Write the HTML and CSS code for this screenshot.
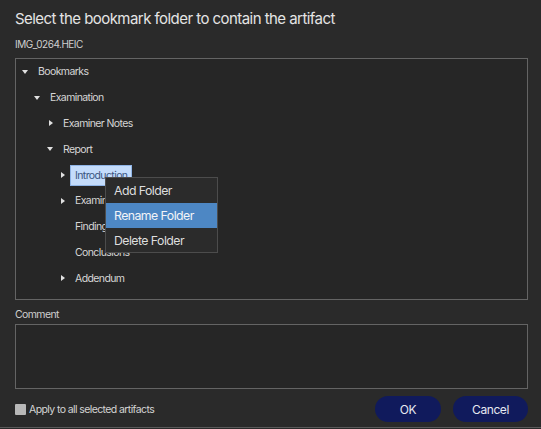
FILE: index.html
```html
<!DOCTYPE html>
<html>
<head>
	<meta charset="utf-8">
	<title>Select bookmark folder</title>
	<link rel="stylesheet" href="styles.css">
</head>
<body>
<div class="dlg">
	<div class="title">Select the bookmark folder to contain the artifact</div>
	<div class="file">IMG_0264.HEIC</div>

	<div class="tree">
		<div class="row l0"><span class="caret down"></span><span class="lbl">Bookmarks</span></div>
		<div class="row l1"><span class="caret down"></span><span class="lbl">Examination</span></div>
		<div class="row l2"><span class="caret right"></span><span class="lbl">Examiner Notes</span></div>
		<div class="row l2"><span class="caret down"></span><span class="lbl">Report</span></div>
		<div class="row l3"><span class="caret right"></span><span class="lbl sel">Introduction</span></div>
		<div class="row l3"><span class="caret right"></span><span class="lbl">Examiner Findings</span></div>
		<div class="row l3"><span class="caret"></span><span class="lbl">Findings</span></div>
		<div class="row l3"><span class="caret"></span><span class="lbl">Conclusions</span></div>
		<div class="row l3"><span class="caret right"></span><span class="lbl">Addendum</span></div>

		<!-- context menu over the tree -->
		<div class="menu">
			<div class="mi">Add Folder</div>
			<div class="mi on">Rename Folder</div>
			<div class="mi">Delete Folder</div>
		</div>
	</div>

	<div class="clabel">Comment</div>
	<div class="comment"></div>

	<div class="foot">
		<label class="chk"><span class="box"></span>Apply to all selected artifacts</label>
		<div class="btns">
			<button class="btn ok">OK</button>
			<button class="btn cancel">Cancel</button>
		</div>
	</div>
</div>
</body>
</html>
```

FILE: styles.css
```css
html, body {
	margin:0;
	background:#2a2a2a;
	}
.dlg {
	height:428px;
	box-sizing:border-box;
	padding:0 13px 0 15px;
	border-bottom:1px solid #5a5a5a;
	font-family:Inter, "Liberation Sans", sans-serif;
	color:#d8d8d8;
	}
.title {
	font-size:15px;
	color:#e4e4e4;
	padding:9px 0 0 0;
	height:22px;
	letter-spacing:-0.55px;
	}
.file {
	font-size:10px;
	color:#d0d0d0;
	padding:7px 0 0 0;
	height:20px;
	letter-spacing:-0.5px;
	}
.tree {
	position:relative;
	height:240px;
	border:1px solid #646464;
	background:#262626;
	}
.row {
	display:flex;
	align-items:center;
	height:25.8px;
	font-size:10.5px;
	letter-spacing:-0.6px;
	color:#d6d6d6;
	}
.l0 { padding-left:5px; }
.l1 { padding-left:17px; }
.l2 { padding-left:30px; }
.l3 { padding-left:42px; }
.caret {
	width:16px;
	height:8px;
	flex:none;
	position:relative;
	}
.caret.down:before {
	content:"";
	position:absolute;
	left:1px;
	top:2px;
	border-left:3px solid transparent;
	border-right:3px solid transparent;
	border-top:4px solid #e0e0e0;
	}
.caret.right:before {
	content:"";
	position:absolute;
	left:3px;
	top:1px;
	border-top:3px solid transparent;
	border-bottom:3px solid transparent;
	border-left:4px solid #e0e0e0;
	}
.lbl {
	padding:3px 4px;
	margin-left:-3px;
	}
.lbl.sel {
	background:#c4dcfb;
	color:#3a557f;
	outline:1px solid #8fb4e6;
	}
.menu {
	position:absolute;
	left:89px;
	top:118px;
	width:111px;
	border:1px solid #4c4c4c;
	background:#2b2b2b;
	}
.mi {
	height:25px;
	line-height:25px;
	padding-left:8px;
	font-size:12.3px;
	letter-spacing:-0.55px;
	color:#dedede;
	}
.mi:last-child {
	height:24px;
	}
.mi.on {
	background:#4d87c4;
	color:#f2f4f8;
	}
.clabel {
	font-size:10.5px;
	color:#cfcfcf;
	padding:8px 0 0 0;
	height:16px;
	letter-spacing:-0.6px;
	}
.comment {
	height:63px;
	border:1px solid #646464;
	background:#262626;
	}
.foot {
	display:flex;
	justify-content:space-between;
	align-items:center;
	padding-top:7px;
	}
.chk {
	display:flex;
	align-items:center;
	font-size:10.5px;
	color:#d4d4d4;
	letter-spacing:-0.6px;
	}
.box {
	width:11px;
	height:11px;
	background:#b8b8b8;
	border-radius:1px;
	margin-right:3px;
	}
.btns {
	display:flex;
	gap:12px;
	}
.btn {
	height:26px;
	border:none;
	border-radius:13px;
	background:#101a5c;
	color:#e6e8f0;
	font-family:Inter, "Liberation Sans", sans-serif;
	font-size:12px;
	letter-spacing:-0.4px;
	}
.ok { width:66px; }
.cancel { width:75px; }
```
